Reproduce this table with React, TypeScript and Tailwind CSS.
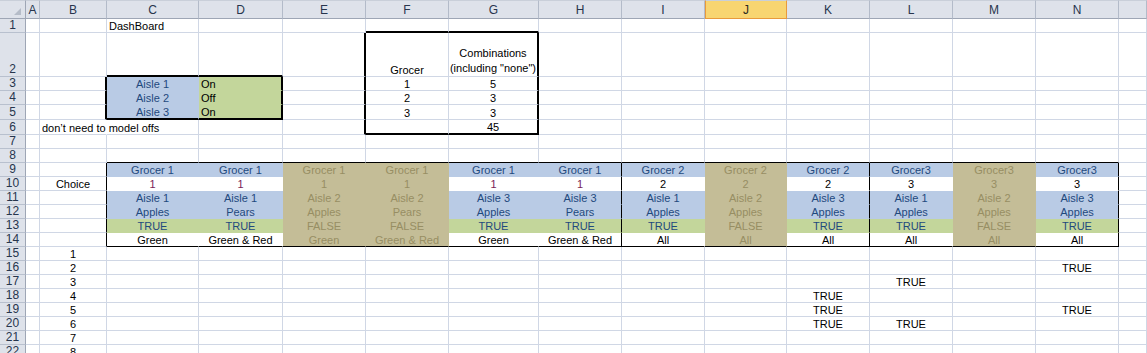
import React, { Fragment } from "react";

type Cell = { t?: string; a?: "l" | "c"; bg?: string; fg?: string; lead?: string };

const COLS = ["A", "B", "C", "D", "E", "F", "G", "H", "I", "J", "K", "L", "M", "N", "O"];
const ROWS = Array.from({ length: 22 }, (_, i) => i + 1);

const BLUE = "bg-[#b9cbe5]";
const GREEN = "bg-[#c3d69b]";
const TAN = "bg-[#c4bd97]";
const WHITE = "bg-white";
const NAVY = "text-[#1f497d]";
const OLIVE = "text-[#978e63]";
const PLUM = "text-[#7a2458]";
const BLACK = "text-black";

const R_GRID = "border-r border-r-[#d0d7e5]";
const R_NONE = "border-r border-r-transparent";
const R_K1 = "border-r border-r-black";
const R_K2 = "border-r-2 border-r-black";
const B_GRID = "border-b border-b-[#d0d7e5]";
const B_NONE = "border-b border-b-transparent";
const B_K1 = "border-b border-b-black";
const B_K2 = "border-b-2 border-b-black";

const idx = (c: string) => COLS.indexOf(c);
const inCN = (c: string) => idx(c) >= idx("C") && idx(c) <= idx("N");
const inCM = (c: string) => idx(c) >= idx("C") && idx(c) <= idx("M");

const data: Record<string, Cell> = {
  C1: { t: "DashBoard", a: "l" },
  F2: { t: "Grocer" },
  G2: { t: "Combinations\n(including \"none\")", lead: "leading-[15px]" },
  C3: { t: "Aisle 1", bg: BLUE, fg: NAVY },
  C4: { t: "Aisle 2", bg: BLUE, fg: NAVY },
  C5: { t: "Aisle 3", bg: BLUE, fg: NAVY },
  D3: { t: "On", a: "l", bg: GREEN },
  D4: { t: "Off", a: "l", bg: GREEN },
  D5: { t: "On", a: "l", bg: GREEN },
  F3: { t: "1" },
  F4: { t: "2" },
  F5: { t: "3" },
  G3: { t: "5" },
  G4: { t: "3" },
  G5: { t: "3" },
  G6: { t: "45" },
  B6: { t: "don\u2019t need to model offs", a: "l" },
  B10: { t: "Choice" },
  K18: { t: "TRUE" },
  K19: { t: "TRUE" },
  K20: { t: "TRUE" },
  L17: { t: "TRUE" },
  L20: { t: "TRUE" },
  N16: { t: "TRUE" },
  N19: { t: "TRUE" },
};

for (let i = 1; i <= 8; i++) data["B" + (14 + i)] = { t: String(i) };

type Col = { c: string; g: string; n: string; aisle: string; fruit: string; on: boolean; color: string };
const table: Col[] = [
  { c: "C", g: "Grocer 1", n: "1", aisle: "Aisle 1", fruit: "Apples", on: true, color: "Green" },
  { c: "D", g: "Grocer 1", n: "1", aisle: "Aisle 1", fruit: "Pears", on: true, color: "Green & Red" },
  { c: "E", g: "Grocer 1", n: "1", aisle: "Aisle 2", fruit: "Apples", on: false, color: "Green" },
  { c: "F", g: "Grocer 1", n: "1", aisle: "Aisle 2", fruit: "Pears", on: false, color: "Green & Red" },
  { c: "G", g: "Grocer 1", n: "1", aisle: "Aisle 3", fruit: "Apples", on: true, color: "Green" },
  { c: "H", g: "Grocer 1", n: "1", aisle: "Aisle 3", fruit: "Pears", on: true, color: "Green & Red" },
  { c: "I", g: "Grocer 2", n: "2", aisle: "Aisle 1", fruit: "Apples", on: true, color: "All" },
  { c: "J", g: "Grocer 2", n: "2", aisle: "Aisle 2", fruit: "Apples", on: false, color: "All" },
  { c: "K", g: "Grocer 2", n: "2", aisle: "Aisle 3", fruit: "Apples", on: true, color: "All" },
  { c: "L", g: "Grocer3", n: "3", aisle: "Aisle 1", fruit: "Apples", on: true, color: "All" },
  { c: "M", g: "Grocer3", n: "3", aisle: "Aisle 2", fruit: "Apples", on: false, color: "All" },
  { c: "N", g: "Grocer3", n: "3", aisle: "Aisle 3", fruit: "Apples", on: true, color: "All" },
];

for (const col of table) {
  const vals = [col.g, col.n, col.aisle, col.fruit, col.on ? "TRUE" : "FALSE", col.color];
  vals.forEach((v, i) => {
    const r = 9 + i;
    let bg = TAN;
    let fg = OLIVE;
    if (col.on) {
      if (r === 9 || r === 11 || r === 12) {
        bg = BLUE;
        fg = NAVY;
      } else if (r === 13) {
        bg = GREEN;
        fg = NAVY;
      } else {
        bg = WHITE;
        fg = r === 10 && col.n === "1" ? PLUM : BLACK;
      }
    }
    data[col.c + r] = { t: v, bg, fg };
  });
}

function rightB(r: number, c: string) {
  if (r >= 3 && r <= 5 && (c === "B" || c === "D")) return R_K2;
  if (r >= 2 && r <= 6 && (c === "E" || c === "G")) return R_K2;
  if (r >= 9 && r <= 14 && ["B", "H", "K", "N"].includes(c)) return R_K1;
  if (r >= 3 && r <= 5 && c === "C") return R_NONE;
  if (r >= 9 && r <= 14 && inCM(c)) return R_NONE;
  if (r === 6 && c === "B") return R_NONE;
  return R_GRID;
}

function bottomB(r: number, c: string) {
  if ((r === 2 || r === 5) && (c === "C" || c === "D")) return B_K2;
  if ((r === 1 || r === 6) && (c === "F" || c === "G")) return B_K2;
  if ((r === 8 || r === 14) && inCN(c)) return B_K1;
  if ((r === 3 || r === 4) && (c === "C" || c === "D")) return B_NONE;
  if (r >= 9 && r <= 13 && inCN(c)) return B_NONE;
  return B_GRID;
}

function SheetCell({ r, c }: { r: number; c: string }) {
  const d = data[c + r] || {};
  const align = d.a === "l" ? "justify-start pl-[2px]" : "justify-center text-center";
  return (
    <div
      className={`flex min-w-0 items-end overflow-visible whitespace-pre text-[11px] ${d.lead ?? "leading-[12px]"} ${rightB(r, c)} ${bottomB(r, c)} ${d.bg ?? ""} ${d.fg ?? BLACK} ${align}`}
    >
      {d.t ? <span>{d.t}</span> : null}
    </div>
  );
}

function ColHeader({ c }: { c: string }) {
  if (c === "J") {
    return (
      <div className="flex items-center justify-center border-b border-r border-l border-b-[#e89a3c] border-r-[#e89a3c] border-l-[#e89a3c] border-t border-t-[#c9cfd9] bg-[#f8d571] text-[12px] text-[#2b2a22]">
        J
      </div>
    );
  }
  return (
    <div className="flex items-center justify-center border-b border-r border-t border-t-[#c9cfd9] border-b-[#9ea6b5] border-r-[#b3bbc9] bg-[#dee2ea] text-[12px] text-[#27354d]">
      {c === "O" ? "" : c}
    </div>
  );
}

function RowHeader({ r }: { r: number }) {
  return (
    <div className="flex items-end justify-center border-b border-r border-b-[#b8c0ce] border-r-[#9ea6b5] bg-[#dee2ea] text-[12px] leading-[13px] text-[#27354d]">
      {r}
    </div>
  );
}

export default function App() {
  return (
    <div className="h-[353px] w-[1147px] overflow-hidden bg-white font-['Liberation_Sans',Arial,sans-serif]">
      <div className="grid grid-cols-[26px_14px_67px_92px_84px_83px_83px_90px_83px_83px_82px_83px_83px_83px_83px_28px] grid-rows-[19px_14px_44px_14px_14px_15px_15px_14px_14px_repeat(14,14px)]">
        <div className="flex items-end justify-end border-b border-r border-t border-t-[#c9cfd9] border-b-[#9ea6b5] border-r-[#9ea6b5] bg-[#dee2ea] pb-[3px] pr-[4px]">
          <svg width="7" height="7" viewBox="0 0 7 7">
            <polygon points="7,0 7,7 0,7" fill="#b5bcc8" />
          </svg>
        </div>
        {COLS.map((c) => (
          <ColHeader key={c} c={c} />
        ))}
        {ROWS.map((r) => (
          <Fragment key={r}>
            <RowHeader r={r} />
            {COLS.map((c) => (
              <SheetCell key={c + r} r={r} c={c} />
            ))}
          </Fragment>
        ))}
      </div>
    </div>
  );
}
